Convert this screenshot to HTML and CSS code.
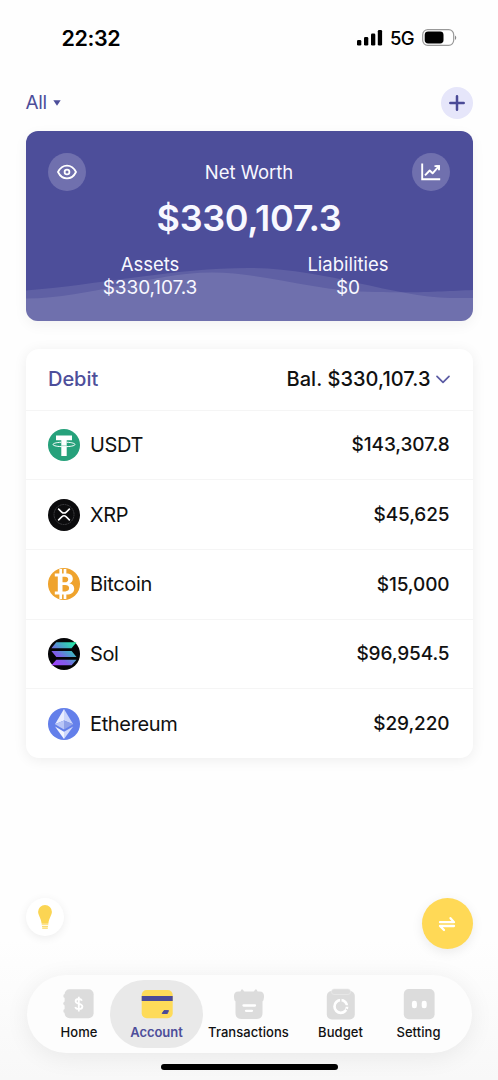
FILE: index.html
```html
<!DOCTYPE html>
<html lang="en">
<head>
<meta charset="utf-8">
<title>Account</title>
<link rel="stylesheet" href="styles.css">
</head>
<body>
<div class="screen">
  <header class="status">
    <span class="time">22:32</span>
    <span class="signals">
      <svg width="26" height="18" viewBox="0 0 26 18"><rect x="0" y="11" width="4.3" height="5.500" rx="1.3"/><rect x="7" y="8" width="4.3" height="8.500" rx="1.3"/><rect x="14" y="4.6" width="4.3" height="11.900" rx="1.3"/><rect x="20.8" y="1" width="4.3" height="15.500" rx="1.3"/></svg>
      <span class="network">5G</span>
      <svg width="35" height="18" viewBox="0 0 35 18"><rect x=".7" y=".7" width="31" height="15.6" rx="5" fill="none" stroke="#999" stroke-width="1.2"/><rect x="2.7" y="2.600" width="18.8" height="11.8" rx="3.4"/><path d="M33 6.500v4.400c1.700-.8 1.700-3.600 0-4.400z" fill="#888"/></svg>
    </span>
  </header>

  <div class="toolbar">
    <span class="filter">All <svg width="8" height="6" viewBox="0 0 8 6"><path d="M.3.3h7.400L4 5.700z" fill="#4d4e9a"/></svg></span>
    <span class="add"><svg width="16" height="16" viewBox="0 0 16 16"><path d="M8 1.300v13.400M1.300 8h13.400" stroke="#4a4a96" stroke-width="2.500" stroke-linecap="round"/></svg></span>
  </div>

  <section class="worth">
    <svg class="waves" viewBox="0 0 447 190" preserveAspectRatio="none"><path d="M0 159.500C70 154 150 137 222 137C300 137 365 166 425 167H447V190H0z"/><path d="M0 167.500C65 167 125 142 185 141.500C235 141 290 161 350 161C400 162 420 160 447 159V190H0z"/></svg>
    <div class="worth-top">
      <span class="round"><svg width="22" height="18" viewBox="0 0 22 18" fill="none" stroke="#fff" stroke-width="1.800"><path d="M2 9C6.300.4 15.700.4 20 9C15.700 17.600 6.300 17.600 2 9z" stroke-linejoin="round"/><circle cx="11" cy="9" r="2.400"/></svg></span>
      <span class="label worth-title">Net Worth</span>
      <span class="round"><svg width="22" height="20" viewBox="0 0 22 20" fill="none" stroke="#fff" stroke-width="1.900"><path d="M2.200 1.500v15.700h18"/><path d="M5 13.400l4.700-4.900 2.900 2.800 5.400-6.100" stroke-linejoin="round"/><path d="M15.500 3.200h4.400v4.400z" fill="#fff" stroke="none"/><path d="M14.500 4.100h4.500v4.200"/></svg></span>
    </div>
    <div class="total">$330,107.3</div>
    <div class="split">
      <div><div class="label">Assets</div><div class="amount">$330,107.3</div></div>
      <div><div class="label">Liabilities</div><div class="amount">$0</div></div>
    </div>
  </section>

  <section class="list">
    <div class="list-head"><span class="group">Debit</span><span class="balance">Bal. $330,107.3<svg width="14" height="9" viewBox="0 0 14 9"><path d="M1 1.300l6 6 6-6" fill="none" stroke="#5c5ca4" stroke-width="1.700" stroke-linecap="round" stroke-linejoin="round"/></svg></span></div>
    <div class="row">
      <svg class="coin" viewBox="0 0 32 32"><circle cx="16" cy="16" r="16" fill="#26a17b"/><path d="M8 6.500h16v4.800h-5.300V27h-5.400V11.300H8z" fill="#fff"/><path d="M13.300 13.200C7.900 13.500 5 14.500 5 15.500c0 1.300 4.900 2.200 11 2.200s11-.9 11-2.200c0-1-2.900-2-8.300-2.300" fill="none" stroke="#fff" stroke-width="1"/><path d="M13.300 16.700h5.400" stroke="#26a17b" stroke-width=".4"/></svg>
      <span class="name">USDT</span><span class="value">$143,307.8</span>
    </div>
    <div class="row">
      <svg class="coin" viewBox="0 0 32 32"><circle cx="16" cy="16" r="16" fill="#0b0b0d"/><circle cx="16" cy="15.500" r="10" fill="none" stroke="#66666a" stroke-width=".5" stroke-dasharray="2 .5"/><path d="M10.200 9.600l3.500 3.500c1.300 1.300 3.300 1.300 4.600 0l3.500-3.500M10.200 21.400l3.500-3.500c1.300-1.300 3.300-1.300 4.600 0l3.500 3.500" fill="none" stroke="#fff" stroke-width="1.500"/></svg>
      <span class="name">XRP</span><span class="value">$45,625</span>
    </div>
    <div class="row">
      <svg class="coin" viewBox="0 0 32 32"><circle cx="16" cy="16" r="16" fill="#efa32d"/><path d="M12.700 1v5M17 1v5M12.700 26v5M17 26v5" stroke="#fff" stroke-width="2.700"/><path fill="#fff" fill-rule="evenodd" d="M6.800 5.500H18c4.300 0 6.800 1.800 6.800 5.200 0 2.500-1.300 4-3.500 4.600 3 .6 4.900 2.400 4.900 5.400 0 3.900-2.900 5.800-7.700 5.800H6.800v-2.900h3V8.500h-3zM14.500 8.700v5.500h2.300c2.200 0 3.400-.9 3.400-2.800s-1.100-2.700-3.300-2.700zM14.500 16.900v6.500h2.700c2.500 0 3.900-1.100 3.900-3.300s-1.500-3.200-4-3.200z"/></svg>
      <span class="name">Bitcoin</span><span class="value">$15,000</span>
    </div>
    <div class="row">
      <svg class="coin" viewBox="0 0 32 32"><defs><linearGradient id="sol" gradientUnits="userSpaceOnUse" x1="5" y1="28" x2="26" y2="4"><stop offset="0" stop-color="#a43cff"/><stop offset=".35" stop-color="#7f5ee9"/><stop offset=".62" stop-color="#4c9fcb"/><stop offset="1" stop-color="#24eda5"/></linearGradient></defs><circle cx="16" cy="16" r="16" fill="#050507"/><path fill="url(#sol)" d="M8.300 4.200H28.500L23.600 10.200H3.400zM3.400 13.100H23.600L28.500 18.900H8.300zM8.300 21.700H28.500L23.600 27.300H3.400z"/></svg>
      <span class="name">Sol</span><span class="value">$96,954.5</span>
    </div>
    <div class="row">
      <svg class="coin" viewBox="0 0 32 32"><circle cx="16" cy="16" r="16" fill="#637fea"/><path fill="#e9edff" d="M16 1L7 16.300 16 12.400z"/><path fill="#cbd5fa" d="M16 1L25.200 16.300 16 12.400z"/><path fill="#b9c6f7" d="M7 16.300L16 12.400V21.600z"/><path fill="#8fa1e8" d="M25.200 16.300L16 12.400V21.600z"/><path fill="#f3f5ff" d="M7 18.600L16 23.800V31z"/><path fill="#d0d9fb" d="M25.200 18.600L16 23.800V31z"/></svg>
      <span class="name">Ethereum</span><span class="value">$29,220</span>
    </div>
  </section>

  <div class="floating">
    <span class="tip"><svg width="16" height="26" viewBox="0 0 16 26"><path d="M1.100 7.800a6.900 6.900 0 0 1 13.800 0c0 3.200-3.100 6.500-3.500 12H4.600C4.200 14.300 1.100 11 1.100 7.800z" fill="#fbd553"/><path d="M4.700 20.700h6.600M5 22.500h6" stroke="#fbdc76" stroke-width="1"/><path d="M5.200 23.500h5.600v1.200H5.200z" fill="#fbd553"/></svg></span>
    <span class="transfer"><svg width="18" height="18" viewBox="0 0 18 18" fill="none" stroke="#fff" stroke-width="2.300" stroke-linecap="round" stroke-linejoin="round"><path d="M2 7.200h14L12.500 3.200M16 11H2l4 4"/></svg></span>
  </div>

  <nav class="tabs">
    <div class="tab home"><svg width="32" height="32" viewBox="0 0 32 32"><rect x="1.600" y="1.200" width="29" height="29" rx="5" fill="#dcdcdc"/><circle cx="2.200" cy="8" r="1.900" fill="#dcdcdc"/><circle cx="2.200" cy="15.500" r="1.900" fill="#dcdcdc"/><circle cx="2.200" cy="23" r="1.900" fill="#dcdcdc"/><path d="M19 12.700c-.6-1.200-1.800-1.700-3.300-1.700-1.800 0-3.100.9-3.100 2.300 0 3.400 6.800 1.600 6.800 5.200 0 1.600-1.500 2.600-3.600 2.600-1.800 0-3.100-.7-3.700-2M15.800 8.700v14.700" fill="none" stroke="#fff" stroke-width="1.800"/></svg><span>Home</span></div>
    <div class="tab account"><svg width="32" height="32" viewBox="0 0 32 32"><rect x=".7" y="2" width="31" height="28.300" rx="5" fill="#fedb59"/><path d="M.7 8h31v5H.7z" fill="#4b4b98"/><path d="M23 22.600h4.500l-1.200 2.900h-5.100z" fill="#4b4b98" stroke="#4b4b98" stroke-linejoin="round"/></svg><span>Account</span></div>
    <div class="tab transactions"><svg width="32" height="32" viewBox="0 0 32 32" fill="#dcdcdc"><path d="M5.400 3.500h21.200C30 3.500 31.300 6 31 9c-.3 2.800-.8 4.300-1.500 4.300V25c0 4-2 6-6 6h-15c-4 0-6-2-6-6V13.300C1.800 13.300 1.200 11.800 1 9 .7 6 2 3.500 5.400 3.500z"/><path d="M7 5l1.200-3.200q.8-1.200 1.800 0L12 5M20 5l2-3.200q1-1.200 1.800 0L25 5z"/><path d="M10.500 17.500h11.500M13 22.800h6" fill="none" stroke="#fff" stroke-width="2.300" stroke-linecap="round"/></svg><span>Transactions</span></div>
    <div class="tab budget"><svg width="32" height="32" viewBox="0 0 32 32"><rect x="1.800" y="3" width="28" height="28.500" rx="5" fill="#dcdcdc"/><rect x="6.500" y="1" width="19" height="5.500" rx="2.500" fill="#dcdcdc" stroke="#ececec" stroke-width=".6"/><circle cx="15.800" cy="18.500" r="6.300" fill="none" stroke="#fff" stroke-width="2.700"/><path d="M15.800 10v5M21 21l3 2M20 18h5" stroke="#dcdcdc" stroke-width="1.500"/></svg><span>Budget</span></div>
    <div class="tab setting"><svg width="32" height="32" viewBox="0 0 32 32"><rect x=".8" y="1" width="30.800" height="30.200" rx="5" fill="#dcdcdc"/><rect x="8.900" y="12.700" width="5" height="7.500" rx="2.300" fill="#fff"/><rect x="18.700" y="12.700" width="5" height="7.500" rx="2.300" fill="#fff"/></svg><span>Setting</span></div>
  </nav>
  <div class="home-bar"></div>
</div>
</body>
</html>
```
FILE: styles.css
```css
* { box-sizing: border-box; }
body { margin: 0; background: #fefefe; font-family: Inter, "Liberation Sans", sans-serif; color: #111; }
svg { display: block; flex: none; }
.screen { width: 498px; height: 1080px; padding: 0 25.5px; display: flex; flex-direction: column; overflow: hidden; background: linear-gradient(#fefefe 87%, #f8f8f8 100%); }
.status { height: 75px; flex: none; display: flex; align-items: center; justify-content: space-between; padding: 0 15.5px 0 36px; color: #000; }
.time { font-size: 21.5px; font-weight: 600; letter-spacing: -.4px; }
.signals { display: flex; align-items: center; }
.network { font-size: 18.5px; font-weight: 450; letter-spacing: -.8px; width: 24px; margin: 0 8px 0 7px; }
.toolbar { height: 55.5px; flex: none; display: flex; align-items: center; justify-content: space-between; }
.filter { display: flex; align-items: center; gap: 6px; color: #4d4e9a; font-size: 19px; letter-spacing: -.3px; }
.add { width: 32px; height: 32px; border-radius: 50%; background: #e6e6fa; display: grid; place-items: center; }
.worth { position: relative; height: 190px; flex: none; border-radius: 12px; overflow: hidden; background: #4d4e9a; color: #f8f8ff; padding: 22.5px 22.5px 0; box-shadow: 0 4px 14px rgba(0, 0, 0, .05); }
.waves { position: absolute; inset: 0; width: 100%; height: 100%; fill: #fff; fill-opacity: .1; }
.worth-top, .total, .split { position: relative; }
.worth-top { display: flex; align-items: center; justify-content: space-between; height: 38px; }
.round { width: 38px; height: 38px; border-radius: 50%; background: #7070ae; display: grid; place-items: center; }
.label { font-size: 18.5px; line-height: 23px; letter-spacing: 0; }
.total { text-align: center; font-size: 36px; line-height: 44px; font-weight: 600; letter-spacing: -.35px; margin-top: 5px; }
.split { display: flex; padding: 0 3px; margin-top: 12.5px; text-align: center; }
.split > div { flex: 1; }
.amount { font-size: 19px; line-height: 23px; letter-spacing: -.1px; }
.list { margin-top: 28.5px; flex: none; border-radius: 13px; background: #fff; box-shadow: 0 2px 14px rgba(0, 0, 0, .07); }
.list-head, .row { display: flex; align-items: center; padding: 0 23px 0 22.5px; }
.list-head { height: 60.5px; justify-content: space-between; font-size: 20px; }
.group { color: #4d4e9a; letter-spacing: -.05px; font-weight: 500; }
.balance { display: flex; align-items: center; gap: 5px; font-weight: 500; letter-spacing: .05px; }
.row { height: 69.7px; border-top: 1.5px solid #f5f5f5; }
.coin { width: 32px; height: 32px; margin-right: 10px; }
.name { font-size: 20px; letter-spacing: -.35px; }
.value { margin-left: auto; font-size: 19px; font-weight: 500; letter-spacing: -.1px; }
.floating { display: flex; justify-content: space-between; align-items: flex-start; margin-top: auto; height: 77px; flex: none; }
.tip { width: 38px; height: 38px; border-radius: 50%; background: #fff; display: grid; place-items: center; box-shadow: 0 2px 10px rgba(0, 0, 0, .07); }
.transfer { width: 51px; height: 51px; border-radius: 50%; background: #ffd956; display: grid; place-items: center; box-shadow: 0 3px 12px rgba(0, 0, 0, .08); }
.tabs { height: 77.5px; flex: none; margin: 0 1px; padding: 5px 13px 5px 21.5px; border-radius: 39px; background: #fdfdfd; box-shadow: 0 4px 24px rgba(0, 0, 0, .07); display: grid; grid-template-columns: 62px 93px 91px 93px 63px; }
.tab { display: flex; flex-direction: column; align-items: center; padding-top: 8px; font-size: 13px; line-height: 16px; font-weight: 500; letter-spacing: .05px; white-space: nowrap; }
.tab span { margin-top: 4px; }
.account { background: #e9e9e9; border-radius: 34px; color: #4d4e9a; font-weight: 600; letter-spacing: -.05px; }
.home-bar { width: 177px; height: 6px; flex: none; border-radius: 3px; background: #000; margin: 11px auto 10.5px; }
```
